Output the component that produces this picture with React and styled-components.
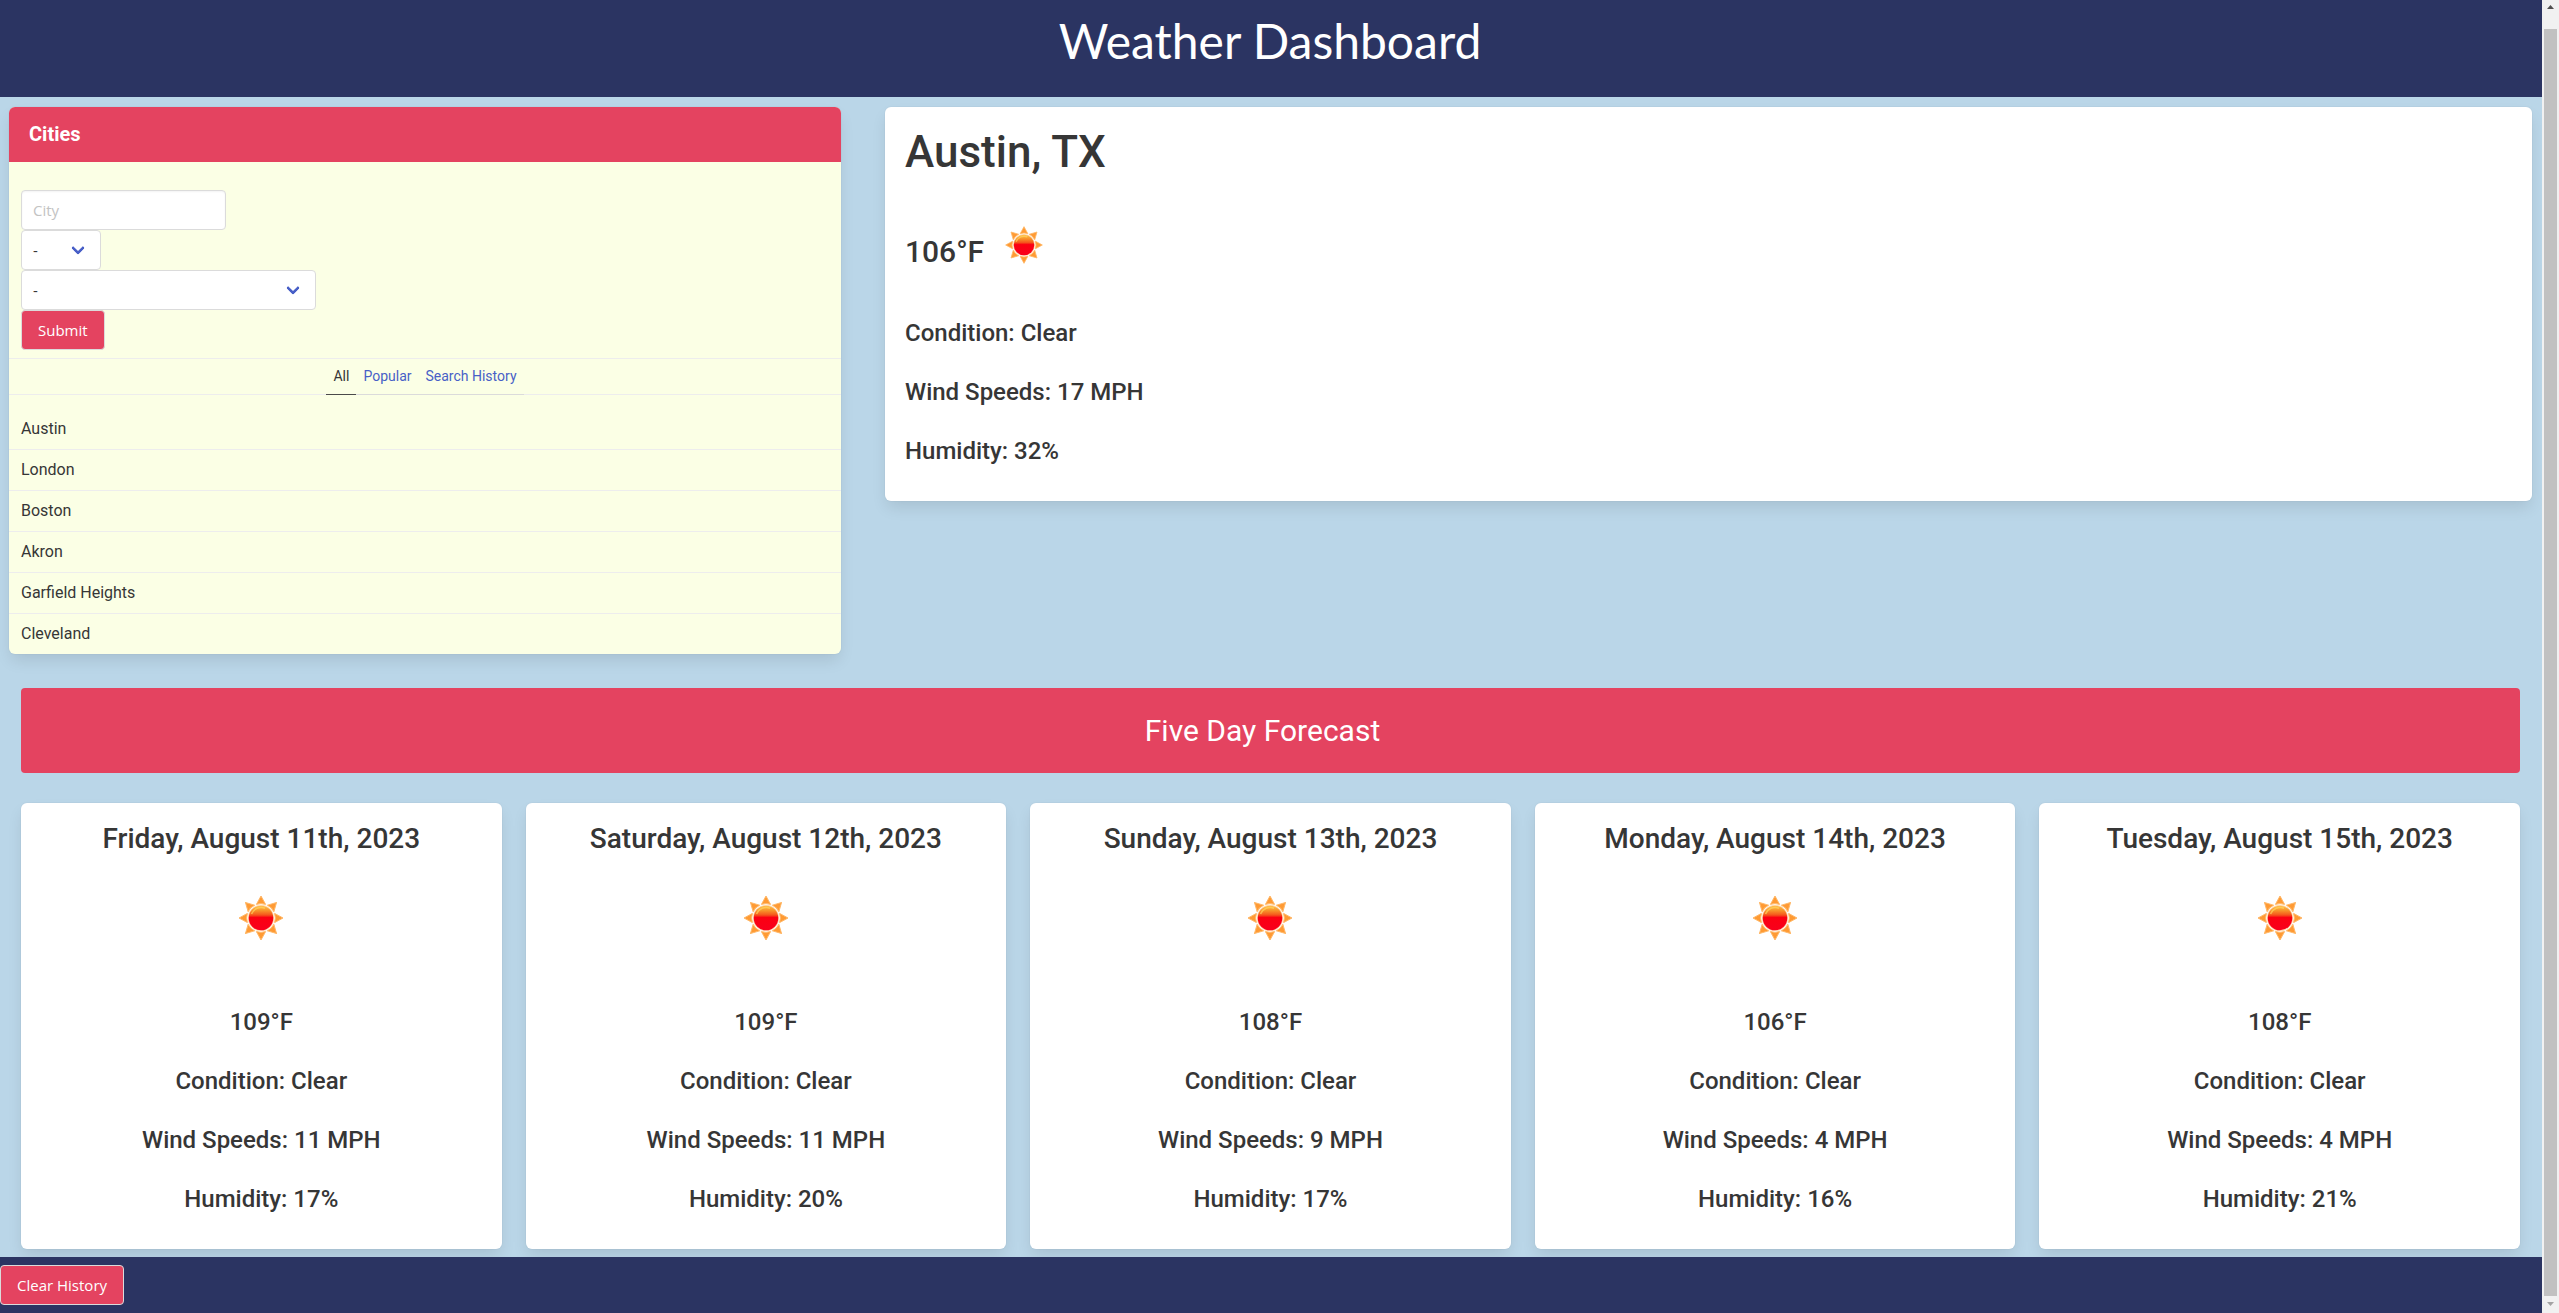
import React from 'react';
import styled, { createGlobalStyle, css } from 'styled-components';

const navy = '#2b3462';
const red = '#e44360';
const sky = '#bad6e8';
const cream = '#fbffe5';
const ui = "'Open Sans', 'Noto Sans', sans-serif";

const GlobalStyle = createGlobalStyle`
  *, *::before, *::after { box-sizing: border-box; }
  body {
    margin: 0;
    background: ${sky};
    color: #363636;
    font: 400 16px/24px Roboto, sans-serif;
  }
  h1, h2, h3, p, ul { margin: 0; padding: 0; }
  ul { list-style: none; }
`;

const Window = styled.div`
  display: flex;
  min-height: 100vh;
`;

const Page = styled.div`
  flex: 1;
  min-width: 0;
  display: flex;
  flex-direction: column;
`;

const Header = styled.header`
  background: ${navy};
  color: #fff;
  text-align: center;
  padding: 14px 14px 29px 12px;
`;

const PageTitle = styled.h1`
  font: 400 48px/54px Lato, sans-serif;
`;

const Main = styled.main`
  flex: 1;
`;

const TopRow = styled.div`
  display: grid;
  grid-template-columns: 832fr 1647fr;
  gap: 44px;
  align-items: start;
  padding: 10px 10px 0 9px;
`;

const shadow = css`
  box-shadow: 0 8px 16px -2px rgba(10, 10, 10, 0.1), 0 0 0 1px rgba(10, 10, 10, 0.02);
`;

const Panel = styled.nav`
  ${shadow}
  border-radius: 6px;
  background: ${cream};
`;

const PanelHeading = styled.h2`
  background: ${red};
  color: #fff;
  border-radius: 6px 6px 0 0;
  padding: 15px 20px;
  font-size: 20px;
  line-height: 25px;
  font-weight: 700;
`;

const SearchForm = styled.form`
  display: flex;
  flex-direction: column;
  align-items: flex-start;
  padding: 28px 12px 8px;
  border-bottom: 1px solid #ededed;
`;

const control = css`
  height: 40px;
  border: 1px solid #dbdbdb;
  border-radius: 4px;
  font: 400 15px/24px ${ui};
`;

const CityInput = styled.input`
  ${control}
  width: 205px;
  padding: 7px 11px;
  background: #fff;
  box-shadow: inset 0 1px 2px rgba(10, 10, 10, 0.05);
  &::placeholder { color: #c3c3c3; opacity: 1; }
`;

const SelectBox = styled.div`
  position: relative;
  width: ${(p) => p.$width}px;
  &::after {
    content: '';
    position: absolute;
    top: 50%;
    right: 18px;
    width: 10px;
    height: 10px;
    margin-top: -7px;
    border: 3px solid #485fc7;
    border-top: 0;
    border-right: 0;
    border-radius: 2px;
    transform: rotate(-45deg);
    pointer-events: none;
  }
`;

const Select = styled.select`
  ${control}
  display: block;
  width: 100%;
  appearance: none;
  background: #fff;
  color: #363636;
  padding: 7px 40px 7px 11px;
`;

const Button = styled.button`
  ${control}
  background: ${red};
  color: #fff;
  padding: 7px 16px;
  cursor: pointer;
`;

const Tabs = styled.div`
  display: flex;
  justify-content: center;
  font-size: 14px;
  line-height: 21px;
  height: 36px;
  border-bottom: 1px solid #ededed;
`;

const Tab = styled.a`
  height: 36px;
  padding: 7px;
  text-decoration: none;
  color: ${(p) => (p.$active ? '#363636' : '#485fc7')};
  border-bottom: 1px solid ${(p) => (p.$active ? '#4a4a4a' : '#dbdbdb')};
`;

const CityList = styled.ul`
  padding-top: 14px;
`;

const CityItem = styled.li`
  padding: 8px 12px;
  border-bottom: 1px solid #ededed;
  &:last-child { border-bottom: 0; }
`;

const Card = styled.section`
  ${shadow}
  background: #fff;
  border-radius: 6px;
  padding: ${(p) => (p.$center ? '20px 20px 32px' : '18px 20px 32px')};
  text-align: ${(p) => (p.$center ? 'center' : 'left')};
  font-weight: 500;
`;

const CityName = styled.h2`
  font-size: 44px;
  line-height: 54px;
  font-weight: 500;
`;

const Current = styled.div`
  display: flex;
  align-items: center;
  margin: 33px 0 24px;
  height: 80px;
  font-size: 30px;
  line-height: 36px;
`;

const Facts = styled.div`
  display: flex;
  flex-direction: column;
  gap: 24px;
  font-size: 24px;
  line-height: 35px;
`;

const SmallSun = styled.svg`
  width: 40px;
  height: 40px;
  margin: 0 0 14px 20px;
`;

const LargeSun = styled.svg`
  display: block;
  width: 48px;
  height: 48px;
  margin: 39px auto 63px;
`;

const Banner = styled.h2`
  margin: 34px 22px 30px 21px;
  padding: 24px 40px 24px 24px;
  border-radius: 4px;
  background: ${red};
  color: #fff;
  text-align: center;
  font-size: 30px;
  line-height: 37px;
  font-weight: 400;
`;

const Forecast = styled.div`
  display: grid;
  grid-template-columns: repeat(5, 1fr);
  gap: 24px;
  padding: 0 22px 8px 21px;
`;

const Day = styled.h3`
  font-size: 28px;
  line-height: 32px;
  font-weight: 500;
`;

const Footer = styled.footer`
  background: ${navy};
  padding: 8px 0;
  display: flex;
`;

const ScrollBar = styled.div`
  flex: none;
  width: 17px;
  display: flex;
  flex-direction: column;
  align-items: center;
  background: #f1f1f1;
`;

const ScrollArrow = styled.svg`
  width: 7px;
  height: 4px;
  margin: ${(p) => (p.$down ? '6px 0 7px' : '5px 0 20px')};
  fill: ${(p) => (p.$down ? '#a3a3a3' : '#505050')};
`;

const Thumb = styled.div`
  flex: 1;
  width: 13px;
  background: #c1c1c1;
`;

const rays = [0, 45, 90, 135, 180, 225, 270, 315];

function SunDrawing({ as: Frame, id }) {
  return (
    <Frame viewBox="-24 -24 48 48" role="img" aria-label="Clear sky">
      <defs>
        <linearGradient id={id} x1="0" y1="0" x2="0" y2="1">
          <stop offset="0" stopColor="#ffc04d" />
          <stop offset="0.2" stopColor="#f7932a" />
          <stop offset="0.38" stopColor="#f5551c" />
          <stop offset="0.48" stopColor="#fb0012" />
          <stop offset="1" stopColor="#f8001c" />
        </linearGradient>
      </defs>
      {rays.map((angle) => (
        <path
          key={angle}
          d="M0 -22 L4.6 -13.6 Q0 -15.2 -4.6 -13.6 Z"
          fill="#ff9a33"
          stroke="#ffb868"
          strokeWidth="1"
          strokeLinejoin="round"
          transform={`rotate(${angle})`}
        />
      ))}
      <circle r="13.2" fill="#ffdcb4" />
      <circle r="12.3" fill={`url(#${id})`} />
      <path d="M-9.5 -4 A10.5 10.5 0 0 1 4 -9.8" fill="none" stroke="#ffd45c" strokeWidth="1.6" opacity="0.7" />
    </Frame>
  );
}

const cities = ['Austin', 'London', 'Boston', 'Akron', 'Garfield Heights', 'Cleveland'];

const days = [
  { date: 'Friday, August 11th, 2023', temp: 109, wind: 11, humidity: 17 },
  { date: 'Saturday, August 12th, 2023', temp: 109, wind: 11, humidity: 20 },
  { date: 'Sunday, August 13th, 2023', temp: 108, wind: 9, humidity: 17 },
  { date: 'Monday, August 14th, 2023', temp: 106, wind: 4, humidity: 16 },
  { date: 'Tuesday, August 15th, 2023', temp: 108, wind: 4, humidity: 21 },
];

export default function App() {
  return (
    <>
      <GlobalStyle />
      <Window>
        <Page>
          <Header>
            <PageTitle>Weather Dashboard</PageTitle>
          </Header>
          <Main>
            <TopRow>
              <Panel>
                <PanelHeading>Cities</PanelHeading>
                <SearchForm onSubmit={(e) => e.preventDefault()}>
                  <CityInput type="text" placeholder="City" aria-label="City" />
                  <SelectBox $width={80}>
                    <Select aria-label="State"><option>-</option></Select>
                  </SelectBox>
                  <SelectBox $width={295}>
                    <Select aria-label="Country"><option>-</option></Select>
                  </SelectBox>
                  <Button type="submit">Submit</Button>
                </SearchForm>
                <Tabs>
                  <Tab href="#all" $active>All</Tab>
                  <Tab href="#popular">Popular</Tab>
                  <Tab href="#history">Search History</Tab>
                </Tabs>
                <CityList>
                  {cities.map((city) => <CityItem key={city}>{city}</CityItem>)}
                </CityList>
              </Panel>
              <Card>
                <CityName>Austin, TX</CityName>
                <Current>
                  <span>106°F</span>
                  <SunDrawing as={SmallSun} id="sun-now" />
                </Current>
                <Facts>
                  <p>Condition: Clear</p>
                  <p>Wind Speeds: 17 MPH</p>
                  <p>Humidity: 32%</p>
                </Facts>
              </Card>
            </TopRow>
            <Banner>Five Day Forecast</Banner>
            <Forecast>
              {days.map((day, i) => (
                <Card key={day.date} $center>
                  <Day>{day.date}</Day>
                  <SunDrawing as={LargeSun} id={`sun-${i}`} />
                  <Facts>
                    <p>{day.temp}°F</p>
                    <p>Condition: Clear</p>
                    <p>Wind Speeds: {day.wind} MPH</p>
                    <p>Humidity: {day.humidity}%</p>
                  </Facts>
                </Card>
              ))}
            </Forecast>
          </Main>
          <Footer>
            <Button type="button">Clear History</Button>
          </Footer>
        </Page>
        <ScrollBar aria-hidden="true">
          <ScrollArrow viewBox="0 0 7 4"><path d="M0 4 L3.5 0 L7 4 Z" /></ScrollArrow>
          <Thumb />
          <ScrollArrow $down viewBox="0 0 7 4"><path d="M0 0 L3.5 4 L7 0 Z" /></ScrollArrow>
        </ScrollBar>
      </Window>
    </>
  );
}
